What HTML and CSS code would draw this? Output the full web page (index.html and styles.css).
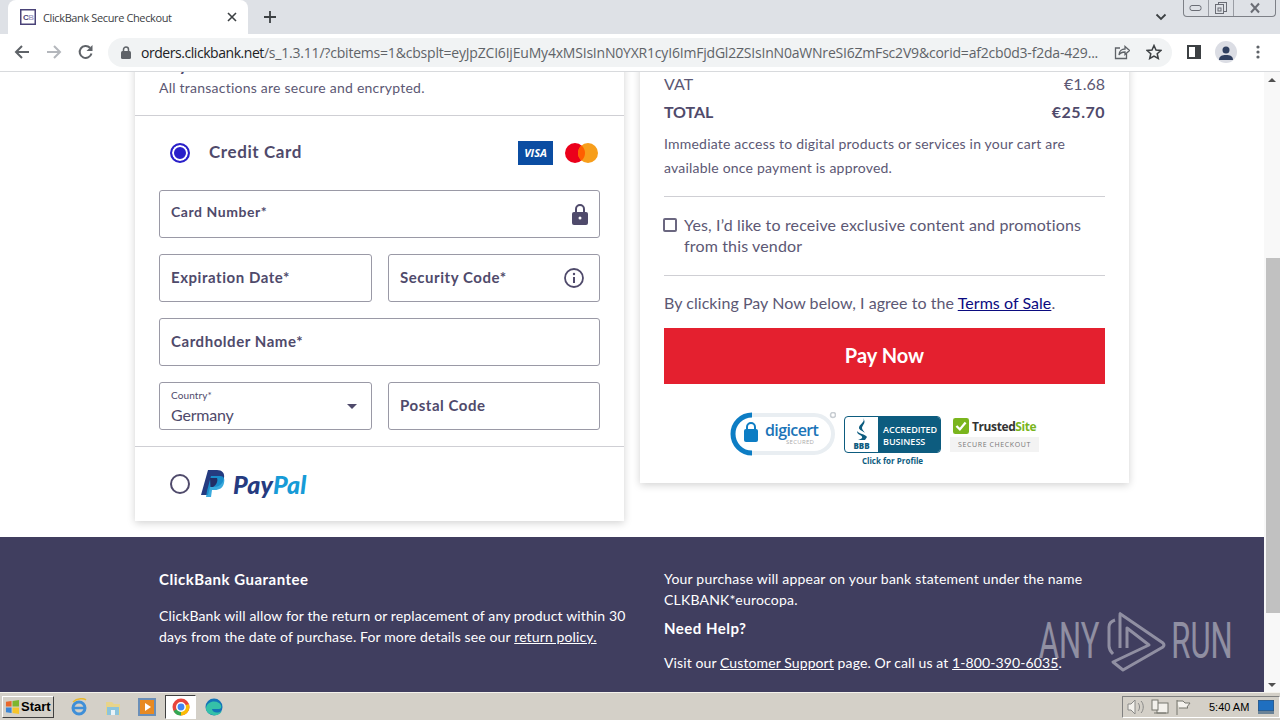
FILE: index.html
```html
<!DOCTYPE html>
<html lang="en">
<head>
<meta charset="utf-8">
<title>ClickBank Secure Checkout</title>
<link rel="stylesheet" href="styles.css">
</head>
<body>
<div class="tabbar">
  <div class="tab">
    <svg class="favicon" width="16" height="16" viewBox="0 0 16 16"><rect x=".75" y=".75" width="14.5" height="14.5" fill="#fff" stroke="#4a4378" stroke-width="1.5"/><text x="3" y="11" class="fav-text">C</text><text x="8.3" y="11" class="fav-text fav-b">B</text></svg>
    <span class="tab-title">ClickBank Secure Checkout</span>
    <svg class="tab-x" width="10" height="10" viewBox="0 0 10 10"><path d="M1 1l8 8M9 1l-8 8" stroke="#3c4043" stroke-width="1.6"/></svg>
  </div>
  <svg class="newtab" width="12" height="12" viewBox="0 0 12 12"><path d="M6 0v12M0 6h12" stroke="#3c4043" stroke-width="1.8"/></svg>
  <div class="tabbar-right">
    <svg class="tab-caret" width="12" height="8" viewBox="0 0 12 8"><path d="M1.5 1.5L6 6l4.500-4.500" fill="none" stroke="#3c4043" stroke-width="1.8"/></svg>
    <div class="winbtns">
      <span class="winbtn"><svg width="14" height="8" viewBox="0 0 14 8"><rect x="1" y="1.500" width="11" height="5" rx="2" fill="none" stroke="#6a6d75"/></svg></span>
      <span class="winbtn"><svg width="14" height="14" viewBox="0 0 14 14"><rect x="4.500" y="1.500" width="8" height="9" fill="none" stroke="#6a6d75"/><rect x="1.500" y="3.500" width="8" height="9" fill="#dee1e6" stroke="#6a6d75"/><rect x="4" y="7" width="3" height="3" fill="none" stroke="#6a6d75"/></svg></span>
      <span class="winbtn winbtn-close"><svg width="14" height="12" viewBox="0 0 14 12"><path d="M3 1.500l8 9M11 1.500l-8 9" stroke="#6a6d75" stroke-width="2" fill="none"/></svg></span>
    </div>
  </div>
</div>

<div class="toolbar">
  <svg width="16" height="16" viewBox="0 0 16 16"><path d="M15 8H2M8 2L2 8l6 6" fill="none" stroke="#5f6368" stroke-width="2"/></svg>
  <svg class="nav-next" width="16" height="16" viewBox="0 0 16 16"><path d="M1 8h13M8 2l6 6-6 6" fill="none" stroke="#b4b7bc" stroke-width="2"/></svg>
  <svg class="nav-reload" width="16" height="16" viewBox="0 0 16 16"><path d="M13.500 9.500A6 6 0 1 1 12 3.700" fill="none" stroke="#5f6368" stroke-width="2"/><path d="M14.500 1v6h-6z" fill="#5f6368"/></svg>
  <div class="omnibox">
    <svg width="10" height="13" viewBox="0 0 10 13"><rect y="5" width="10" height="8" rx="1.500" fill="#5f6368"/><path d="M2.500 6V3.500a2.500 2.500 0 0 1 5 0V6" fill="none" stroke="#5f6368" stroke-width="1.500"/></svg>
    <span class="url"><span class="url-host">orders.clickbank.net</span>/s_1.3.11/?cbitems=1&amp;cbsplt=eyJpZCI6IjEuMy4xMSIsInN0YXR1cyI6ImFjdGl2ZSIsInN0aWNreSI6ZmFsc2V9&amp;corid=af2cb0d3-f2da-429...</span>
    <svg class="omni-share" width="16" height="16" viewBox="0 0 16 16"><path d="M6 4H1.500v10.500h11V10" fill="none" stroke="#5f6368" stroke-width="1.300"/><path d="M5 11c0-4 3-6 6-6V2.500l4.500 4-4.500 4V8c-3 0-5 1-6 3z" fill="none" stroke="#5f6368" stroke-width="1.300"/></svg>
    <svg width="16" height="16" viewBox="0 0 16 16"><path d="M8 1.500l2 4.500 4.900.5-3.700 3.200 1.100 4.800L8 12l-4.300 2.500 1.100-4.800L1.100 6.500 6 6z" fill="none" stroke="#3c4043" stroke-width="1.500"/></svg>
  </div>
  <svg class="side-panel" width="14" height="14" viewBox="0 0 14 14"><path d="M0 0h14v14H0z" fill="#3c4043"/><path d="M2 2h6v10H2z" fill="#fff"/></svg>
  <span class="avatar"><svg width="14" height="14" viewBox="0 0 14 14"><circle cx="7" cy="4" r="3.500" fill="#2f3f5f"/><path d="M0 14c0-4 3-5 7-5s7 1 7 5z" fill="#2f3f5f"/></svg></span>
  <svg class="kebab" width="4" height="14" viewBox="0 0 4 14"><circle cx="2" cy="2" r="1.600" fill="#5f6368"/><circle cx="2" cy="7" r="1.600" fill="#5f6368"/><circle cx="2" cy="12" r="1.600" fill="#5f6368"/></svg>
</div>

<div class="viewport">
  <main class="page">
    <div class="cards">
      <section class="card card-pay">
        <div class="pay-head">
          <h2 class="pay-title">Payment</h2>
          <p class="pay-sub">All transactions are secure and encrypted.</p>
        </div>
        <div class="method-row">
          <span class="radio radio-on"></span>
          <span class="method-name">Credit Card</span>
          <span class="brands">
            <span class="visa">VISA</span>
            <svg width="33" height="20" viewBox="0 0 33 20"><circle cx="10" cy="10" r="10" fill="#eb001b"/><circle cx="23" cy="10" r="10" fill="#f79e1b"/><path d="M16.500 2.400a10 10 0 0 1 0 15.200 10 10 0 0 1 0-15.200z" fill="#ff5f00"/></svg>
          </span>
        </div>
        <div class="form-grid">
          <div class="field field-wide"><span class="label-card">Card Number*</span>
            <svg class="lock" width="16" height="21" viewBox="0 0 16 21"><rect y="8" width="16" height="13" rx="2" fill="#4f4a6b"/><path d="M4 9V5a4 4 0 0 1 8 0v4" fill="none" stroke="#4f4a6b" stroke-width="2"/><circle cx="8" cy="14" r="1.500" fill="#fff"/></svg>
          </div>
          <div class="field"><span>Expiration Date*</span></div>
          <div class="field"><span>Security Code*</span>
            <svg class="info" width="20" height="20" viewBox="0 0 20 20"><circle cx="10" cy="10" r="9" fill="none" stroke="#4f4a6b" stroke-width="1.800"/><path d="M10 9v6" stroke="#4f4a6b" stroke-width="2"/><circle cx="10" cy="6" r="1.200" fill="#4f4a6b"/></svg>
          </div>
          <div class="field field-wide"><span>Cardholder Name*</span></div>
          <div class="field field-select">
            <div class="select-text"><small>Country*</small><span class="select-value">Germany</span></div>
            <i class="caret"></i>
          </div>
          <div class="field"><span>Postal Code</span></div>
        </div>
        <div class="method-row method-paypal">
          <span class="radio"></span>
          <svg class="pp-mark" width="24" height="28" viewBox="0 0 24 28"><path d="M7 0h9c5 0 8 3 7 8-1 6-5 9-10 9H9l-2 8H0z" fill="#253b80"/><path d="M10 6h9c4 0 5 3 4 7-1 5-5 7-9 7h-3l-1 7H5l1-6z" fill="#179bd7" opacity=".85"/><path d="M9 8h7c1 2 0 7-4 9H9.500z" fill="#222d65"/></svg>
          <span class="pp-word"><b class="pp-pay">Pay</b><b class="pp-pal">Pal</b></span>
        </div>
      </section>

      <section class="card card-summary">
        <div class="sum-row"><span>VAT</span><span>€1.68</span></div>
        <div class="sum-row sum-total"><span>TOTAL</span><span class="sum-amount">€25.70</span></div>
        <p class="sum-note">Immediate access to digital products or services in your cart are available once payment is approved.</p>
        <div class="optin">
          <span class="checkbox"></span>
          <span>Yes, I’d like to receive exclusive content and promotions from this vendor</span>
        </div>
        <p class="terms">By clicking Pay Now below, I agree to the <a href="#">Terms of Sale</a>.</p>
        <button class="pay-btn">Pay Now</button>
        <div class="badges">
          <div class="badge-digicert">
            <svg class="dc-ring" width="106" height="44" viewBox="0 0 106 44"><rect x="3" y="3" width="100" height="38" rx="19" fill="none" stroke="#e9eef2" stroke-width="4"/><path d="M22 3A19 19 0 0 0 22 41" fill="none" stroke="#0d7dc4" stroke-width="5"/><rect x="14" y="17" width="14" height="13" rx="2" fill="#0d7dc4"/><path d="M17 18v-3a4 4 0 0 1 8 0v3" fill="none" stroke="#0d7dc4" stroke-width="2"/><circle cx="103" cy="3" r="2.500" fill="none" stroke="#c8cdd2" stroke-width="1.500"/></svg>
            <span class="dc-name">digicert</span>
            <span class="dc-sub">SECURED</span>
          </div>
          <div class="badge-bbb-wrap">
            <div class="badge-bbb">
              <div class="bbb-left"><svg width="14" height="22" viewBox="0 0 14 22"><path d="M8 0c3 4-4 6-4 10 0 2 4 3 6 5-1-2-3-3-3-5 0-3 5-5 1-10zM2 13c2 3 8 3 10 6l-2 3H3c4-1 6-3 2-5-2-1-3-2-3-4z" fill="#0d5c7f"/></svg><b>BBB</b></div>
              <div class="bbb-right">ACCREDITED<br>BUSINESS</div>
            </div>
            <div class="bbb-link">Click for Profile</div>
          </div>
          <div class="badge-ts">
            <div class="ts-top"><svg width="16" height="16" viewBox="0 0 14 14"><rect width="14" height="14" rx="2" fill="#7ab51d"/><path d="M3 7l3 3 5-6" fill="none" stroke="#fff" stroke-width="2"/></svg><span class="ts-name">Trusted<em>Site</em></span></div>
            <div class="ts-sub">SECURE CHECKOUT</div>
          </div>
        </div>
      </section>
    </div>

    <footer class="footer">
      <div class="foot-col foot-left">
        <h3>ClickBank Guarantee</h3>
        <p class="foot-gap">ClickBank will allow for the return or replacement of any product within 30 days from the date of purchase. For more details see our <a href="#">return policy.</a></p>
      </div>
      <div class="foot-col foot-right">
        <p>Your purchase will appear on your bank statement under the name CLKBANK*eurocopa.</p>
        <h3 class="foot-help">Need Help?</h3>
        <p class="foot-visit">Visit our <a href="#">Customer Support</a> page. Or call us at <a href="#">1-800-390-6035</a>.</p>
      </div>
    </footer>
  </main>
  <div class="scrollbar">
    <span class="sb-arrow sb-up"></span>
    <span class="sb-thumb"></span>
    <span class="sb-arrow sb-down"></span>
  </div>
  <div class="watermark">
    <span class="wm-text">ANY</span>
    <svg class="wm-logo" width="60" height="62" viewBox="0 0 60 62"><path d="M12 3L56 33Q58 35 56 37L16 60 6 52 42 35 20 18V38" fill="none" stroke="#fff" stroke-width="3" stroke-linejoin="round"/><path d="M13 5V38M8 10Q2 12 2 17V36Q2 40 6 44" fill="none" stroke="#fff" stroke-width="3"/></svg>
    <span class="wm-text">RUN</span>
  </div>
</div>

<div class="taskbar">
  <div class="start"><svg width="15" height="14" viewBox="0 0 16 15"><path d="M1 2l6-1v6H1z" fill="#e8672b"/><path d="M8 1l7-1v7H8z" fill="#7db52e"/><path d="M1 8h6v6l-6-1z" fill="#3c86d6"/><path d="M8 8h7v7l-7-1z" fill="#f6c52a"/></svg><b>Start</b></div>
  <div class="quick">
    <svg width="18" height="18" viewBox="0 0 18 18"><circle cx="9" cy="10" r="6" fill="none" stroke="#3f8fd8" stroke-width="3"/><path d="M3 10h12" stroke="#3f8fd8" stroke-width="2.500"/><path d="M3 4c4-4 11-4 13-2" fill="none" stroke="#e8b830" stroke-width="1.500"/></svg>
    <svg width="18" height="18" viewBox="0 0 18 18"><path d="M2 4h6l2 2h6v11H2z" fill="#e8d48a"/><path d="M3 9h12v8H3z" fill="#8cc4dc"/><path d="M7 12h4v5H7z" fill="#e9f3f8"/></svg>
    <svg width="18" height="18" viewBox="0 0 18 18"><rect x="1" y="1" width="16" height="16" fill="#e88a22" stroke="#6b8fb8" stroke-width="2"/><path d="M7 5l6 4-6 4z" fill="#fff"/></svg>
    <span class="task-active"><svg width="18" height="18" viewBox="0 0 18 18"><circle cx="9" cy="9" r="8.500" fill="#e8453c"/><path d="M9 9L1.500 13A8.500 8.500 0 0 0 9 17.500z" fill="#34a853"/><path d="M9 9l7.800-3a8.500 8.500 0 0 1-7.800 11.500z" fill="#fbbc05"/><circle cx="9" cy="9" r="4.200" fill="#4285f4" stroke="#fff" stroke-width="1.500"/></svg></span>
    <svg width="18" height="18" viewBox="0 0 18 18"><circle cx="9" cy="9" r="8.500" fill="#1374b8"/><path d="M1 10C2 4 9 2 14 5c3 2 3 6 0 6H7c0 3 5 5 10 2-2 4-6 5-9 4C4 16 1 14 1 10z" fill="#35c1a8"/></svg>
  </div>
  <div class="tray">
    <svg width="18" height="16" viewBox="0 0 18 16"><path d="M1 5h3l4-4v14l-4-4H1z" fill="#f3f1ec" stroke="#8a8a88"/><path d="M11 4c2 2 2 6 0 8M14 2c3 3 3 9 0 12" fill="none" stroke="#8a8a88"/></svg>
    <svg width="18" height="16" viewBox="0 0 18 16"><rect x="6" y="4" width="11" height="10" fill="#f3f1ec" stroke="#77776f"/><rect x="1" y="1" width="6" height="10" fill="#f3f1ec" stroke="#77776f"/><path d="M3 14h12" stroke="#77776f"/></svg>
    <svg width="16" height="16" viewBox="0 0 16 16"><path d="M2 1v15M2 2h6l2 2h5l-3 4 1 1H4" fill="#f5f3ee" stroke="#77776f"/></svg>
    <span class="clock">5:40 AM</span>
    <svg width="16" height="14" viewBox="0 0 16 14"><rect width="16" height="11" fill="#1f6fc0" stroke="#37506a"/><path d="M0 11h16v3H0z" fill="#6a8296"/></svg>
  </div>
</div>
</body>
</html>
```
FILE: styles.css
```css
* { box-sizing: border-box; margin: 0; padding: 0; }
html, body { width: 1280px; height: 720px; overflow: hidden; }
body { display: flex; flex-direction: column; background: #fff; font-family: "Lato", "Open Sans", sans-serif; color: #4f4a6b; }
svg { display: block; flex: none; }

.tabbar { height: 34px; flex: none; background: #dee1e6; display: flex; align-items: flex-end; padding-left: 8px; }
.tab { width: 240px; height: 34px; background: #fff; border-radius: 8px 8px 0 0; display: flex; align-items: center; padding: 0 11px 0 12px; }
.favicon { margin-right: 7px; }
.fav-text { font: 700 8px "Liberation Sans", sans-serif; fill: #4a4378; }
.fav-b { fill: #a9a4c8; }
.tab-title { flex: 1; font: 11px "Open Sans", sans-serif; color: #3c4043; letter-spacing: -.38px; white-space: nowrap; }
.newtab { margin: 0 0 11px 16px; }
.tabbar-right { margin-left: auto; align-self: stretch; display: flex; padding-right: 4px; }
.tab-caret { margin: 13px 16px 0 0; }
.winbtns { display: flex; height: 17px; border: 1px solid #7d8087; border-top: 0; border-radius: 0 0 4px 4px; }
.winbtn { width: 25px; display: flex; align-items: center; justify-content: center; border-right: 1px solid #9a9da4; }
.winbtn-close { width: 41px; border-right: 0; }

.toolbar { height: 38px; flex: none; background: #fff; border-bottom: 1px solid #d8dadd; display: flex; align-items: center; padding: 0 14px 1px 14px; }
.nav-next { margin-left: 16px; }
.nav-reload { margin-left: 16px; margin-right: 14px; }
.omnibox { width: 1064px; height: 29px; border-radius: 15px; background: #f1f3f4; display: flex; align-items: center; padding: 0 10px 0 13px; }
.url { flex: 1; min-width: 0; margin-left: 10px; font: 14px "Open Sans", sans-serif; letter-spacing: -.2px; color: #5f6368; white-space: nowrap; overflow: hidden; }
.url-host { color: #202124; letter-spacing: -.45px; }
.omni-share { margin: 0 16px 0 6px; }
.side-panel { margin-left: 15px; }
.avatar { width: 22px; height: 22px; border-radius: 50%; background: #dbdde4; margin-left: 14px; display: flex; align-items: flex-end; justify-content: center; padding-bottom: 3px; }
.kebab { margin-left: 19px; }

.viewport { flex: 1; min-height: 0; display: flex; position: relative; overflow: hidden; }
.page { flex: 1; min-width: 0; overflow: hidden; }
.cards { margin-top: -20px; padding: 0 135px 16px; display: flex; align-items: flex-start; gap: 16px; }
.card { width: 489px; background: #fff; box-shadow: 0 2px 8px rgba(0,0,0,.18); }

.pay-head { padding: 0 24px 17px; border-bottom: 1px solid #cfcfd4; }
.pay-title { font-size: 18px; line-height: 24px; font-weight: 700; }
.pay-sub { margin-top: 2px; font-size: 14px; line-height: 20px; letter-spacing: .23px; color: #5c5874; }
.method-row { height: 74px; display: flex; align-items: center; padding: 0 26px 0 35px; }
.radio { width: 20px; height: 20px; border-radius: 50%; border: 2px solid #4f4a6b; flex: none; }
.radio-on { border-color: #2a20c9; background: #2a20c9; box-shadow: inset 0 0 0 2px #fff; }
.method-name { margin-left: 19px; padding-bottom: 3px; font-size: 17px; font-weight: 700; letter-spacing: .6px; }
.brands { margin-left: auto; display: flex; align-items: center; gap: 12px; }
.visa { width: 35px; height: 24px; background: #0b4da2; color: #fff; font: italic 700 11px/24px "Open Sans", sans-serif; text-align: center; }
.form-grid { padding: 0 24px 16px; display: grid; grid-template-columns: 213px 212px; gap: 16px; }
.field { height: 48px; border: 1px solid #9a99a6; border-radius: 3px; display: flex; align-items: center; justify-content: space-between; padding: 0 12px 0 11px; font-size: 15px; font-weight: 700; letter-spacing: .55px; }
.field > span { margin-top: -2px; }
.field > .label-card { margin-top: -5px; font-size: 14px; }
.field-wide { grid-column: 1 / -1; }
.lock { margin-right: -1px; }
.info { margin-right: 3px; }
.field-select { padding-right: 14px; }
.select-text { display: flex; flex-direction: column; font-weight: 400; letter-spacing: 0; }
.select-text small { font-size: 10px; line-height: 12px; margin-top: 2px; letter-spacing: .1px; }
.select-value { font-size: 16px; line-height: 22px; margin-top: 3px; letter-spacing: -.2px; }
.caret { width: 0; height: 0; border: 5px solid transparent; border-top: 5px solid #4f4a6b; border-bottom: 0; }
.method-paypal { border-top: 1px solid #cfcfd4; height: 75px; }
.pp-mark { margin-left: 11px; }
.pp-word { margin-left: 8px; font: italic 900 25px "Lato", sans-serif; letter-spacing: .2px; }
.pp-pay { color: #253b80; font-weight: 900; }
.pp-pal { color: #179bd7; font-weight: 900; }

.card-summary { padding: 20px 24px 17px; font-size: 16px; }
.sum-row { height: 24px; display: flex; justify-content: space-between; align-items: center; padding-bottom: 2px; color: #5c5874; }
.sum-total { margin-top: 4px; font-weight: 700; color: #4f4a6b; letter-spacing: -.1px; }
.sum-amount { letter-spacing: .5px; }
.sum-note { margin-top: 8px; padding-bottom: 16px; border-bottom: 1px solid #cfcfd4; font-size: 14px; line-height: 24px; letter-spacing: .21px; color: #5c5874; }
.optin { display: flex; padding: 17px 0 19px; border-bottom: 1px solid #cfcfd4; line-height: 21px; letter-spacing: .15px; color: #5c5874; }
.checkbox { width: 14px; height: 14px; border: 2px solid #6b6780; border-radius: 2px; margin: 4px 7px 0 -1px; flex: none; }
.terms { margin-top: 15px; line-height: 24px; letter-spacing: .05px; color: #5c5874; }
.terms a { color: #0b0b80; }
.pay-btn { display: block; width: 100%; height: 56px; margin-top: 13px; padding-bottom: 2px; border: 0; background: #e4202f; color: #fff; font: 700 20px "Lato", sans-serif; }
.badges { margin-top: 28px; height: 54px; display: flex; justify-content: center; align-items: flex-start; gap: 9px; }
.badge-digicert { width: 105px; height: 44px; position: relative; }
.dc-ring { position: absolute; left: 0; top: 0; }
.dc-name { position: absolute; left: 35px; top: 7px; font: 600 16px "Open Sans", sans-serif; letter-spacing: -.6px; color: #1b74b8; }
.dc-sub { position: absolute; left: 56px; top: 26px; font: 6px "Open Sans", sans-serif; color: #aaa; letter-spacing: .3px; }
.badge-bbb-wrap { width: 97px; margin-top: 4px; }
.badge-bbb { height: 37px; display: flex; border: 1px solid #0d5c7f; border-radius: 4px; overflow: hidden; }
.bbb-left { width: 33px; display: flex; flex-direction: column; align-items: center; font: 700 8px "Open Sans", sans-serif; color: #0d5c7f; padding-top: 1px; }
.bbb-right { flex: 1; background: #0d5c7f; color: #fff; font: 600 9px/12px "Open Sans", sans-serif; padding: 7px 0 0 5px; white-space: nowrap; }
.bbb-link { margin-top: 3px; font: 700 8px/10px "Open Sans", sans-serif; color: #0d5c7f; text-align: center; }
.badge-ts { width: 89px; height: 37px; margin: 3px 0 0; background: #f3f3f3; }
.ts-top { display: flex; align-items: center; gap: 3px; height: 22px; padding-left: 3px; background: #fff; }
.ts-name { font: 700 12px "Open Sans", sans-serif; letter-spacing: -.4px; color: #333; }
.ts-name em { font-style: normal; color: #7ab51d; }
.ts-sub { font: 7px/15px "Open Sans", sans-serif; letter-spacing: .6px; text-align: center; color: #777; }

.footer { height: 155px; background: #403e5f; color: #fff; padding: 32px 0 0 159px; display: flex; font-size: 14px; line-height: 21px; letter-spacing: .2px; }
.footer a { color: #fff; }
.footer h3 { font-size: 15px; font-weight: 700; letter-spacing: .5px; }
.foot-left { width: 505px; padding-right: 30px; }
.foot-gap { margin-top: 15px; letter-spacing: .13px; }
.foot-right { width: 441px; margin-top: -1px; }
.foot-help { margin-top: 8px; }
.foot-visit { margin-top: 13px; letter-spacing: .1px; }

.scrollbar { width: 16px; flex: none; background: #f8f8f8; display: flex; flex-direction: column; align-items: center; position: relative; }
.sb-arrow { width: 0; height: 0; border: 4px solid transparent; position: absolute; left: 4px; }
.sb-up { top: 6px; border-bottom: 4px solid #505050; border-top: 0; }
.sb-down { bottom: 5px; border-top: 4px solid #505050; border-bottom: 0; }
.sb-thumb { position: absolute; left: 2px; top: 186px; width: 14px; height: 355px; background: #c1c1c1; }

.watermark { position: absolute; left: 1039px; top: 538px; display: flex; align-items: center; opacity: .42; color: #fff; }
.wm-text { font: 400 50px/60px "Roboto", sans-serif; transform: scaleX(.62); width: 60px; display: flex; justify-content: center; }
.wm-logo { margin: 0 5px 0 8px; }

.taskbar { height: 28px; flex: none; background: #d4d0c8; border-top: 1px solid #f4f2ec; display: flex; align-items: center; padding-left: 2px; }
.start { width: 52px; height: 22px; border: 1px solid; border-color: #fff #404040 #404040 #fff; background: #d4d0c8; display: flex; align-items: center; gap: 1px; padding-left: 2px; font: 700 13px "Liberation Sans", sans-serif; color: #000; }
.quick { display: flex; align-items: center; gap: 16px; margin-left: 16px; }
.task-active { width: 31px; height: 24px; margin: 0 -7px; background: #fff; border: 1px solid; border-color: #404040 #fff #fff #404040; display: flex; align-items: center; justify-content: center; }
.tray { margin-left: auto; width: 158px; height: 22px; border: 1px solid; border-color: #808080 #fff #fff #808080; display: flex; align-items: center; gap: 6px; padding-left: 4px; }
.clock { margin-left: 12px; margin-right: 3px; font: 11px "Liberation Sans", sans-serif; color: #000; white-space: nowrap; }
```
